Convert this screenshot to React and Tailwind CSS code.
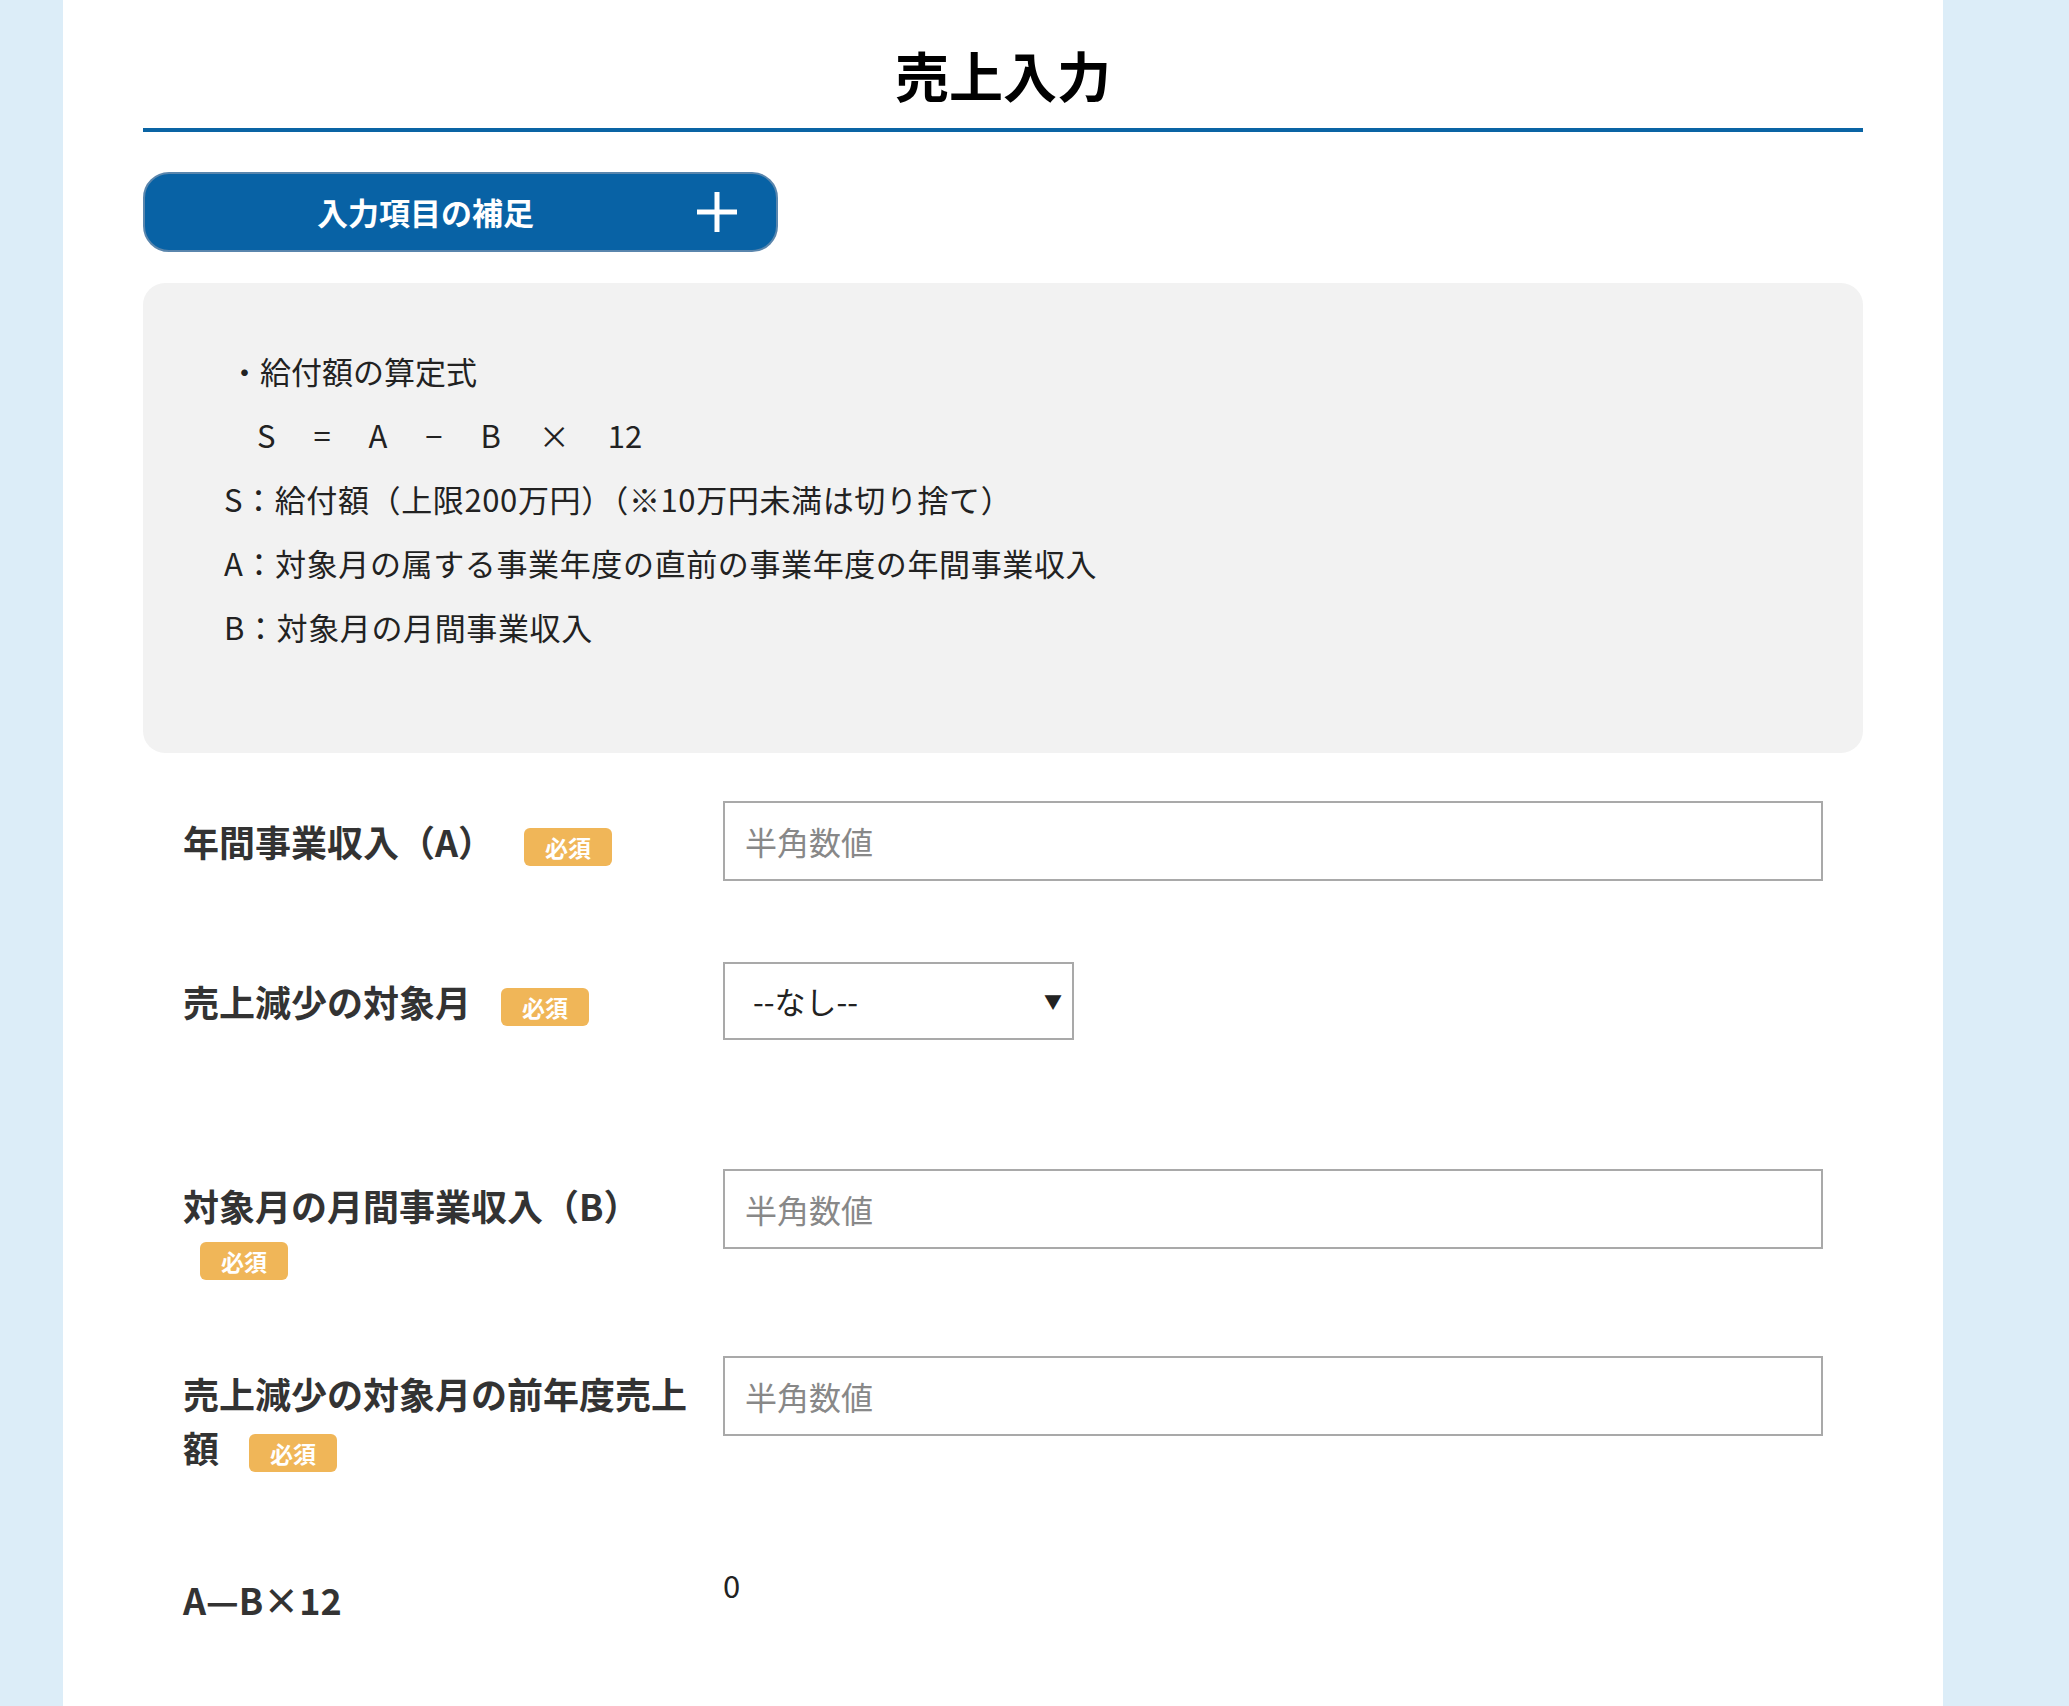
import React from 'react';

const font = { fontFamily: '"Noto Sans CJK JP", "Noto Sans", sans-serif' };

function Badge({ className = '' }) {
    return (
        <span className={"inline-flex items-center justify-center w-[88px] h-[38px] rounded-md bg-[#f0b658] text-white font-bold text-[23px] align-middle " + className}>必須</span>
    );
}

function NumInput() {
    return (
        <input
            type="text"
            placeholder="半角数値"
            className="w-[1100px] h-[80px] shrink-0 border-2 border-[#a9a9a9] px-5 text-[32px] text-[#333] placeholder:text-[#888] outline-none"
        />
    );
}

export default function App() {
    return (
        <div className="min-h-[1706px] bg-[#dcedf8] text-[#333]" style={font}>
            <div className="ml-[63px] w-[1880px] min-h-[1706px] bg-white px-[80px]">
                <h1 className="pt-[40px] text-center text-[54px] font-bold leading-[70px] text-black">売上入力</h1>
                <div className="mt-[18px] h-[4px] bg-[#0a64a4]" />

                <button className="mt-[40px] flex items-center w-[635px] h-[80px] rounded-[26px] border-2 border-[#5a86ad] bg-[#0862a5] text-white">
                    <span className="flex-1 text-center pl-[10px] text-[31px] font-bold">入力項目の補足</span>
                    <svg className="mr-[38px]" width="42" height="42" viewBox="0 0 42 42">
                        <path d="M21 1v40M1 21h40" stroke="white" strokeWidth="5" />
                    </svg>
                </button>

                <div className="mt-[31px] h-[470px] rounded-[22px] bg-[#f2f2f2] pt-[56px] pl-[81px] text-[31px] leading-[64px] text-[#222]">
                    <p className="pl-[5px]">・給付額の算定式</p>
                    <p className="pl-[33px] whitespace-pre">{'S　 =　 A　 −　 B　 ×　 12'}</p>
                    <p className="tracking-[0.02em]">S：給付額（上限200万円）（※10万円未満は切り捨て）</p>
                    <p className="tracking-[0.02em]">A：対象月の属する事業年度の直前の事業年度の年間事業収入</p>
                    <p className="tracking-[0.02em]">B：対象月の月間事業収入</p>
                </div>

                <div className="pl-[40px]">
                    <div className="mt-[48px] flex items-center h-[80px]">
                        <div className="w-[540px] text-[36px] font-bold">
                            年間事業収入（A）<Badge className="ml-[30px]" />
                        </div>
                        <NumInput />
                    </div>

                    <div className="mt-[81px] flex items-center h-[78px]">
                        <div className="w-[540px] text-[36px] font-bold">
                            売上減少の対象月<Badge className="ml-[30px]" />
                        </div>
                        <div className="relative w-[351px] h-[78px] border-2 border-[#a9a9a9] flex items-center pl-[28px] text-[31px] text-[#222]">
                            --なし--
                            <span className="absolute right-[10px] text-[18px]">▼</span>
                        </div>
                    </div>

                    <div className="mt-[129px] flex items-start h-[80px]">
                        <div className="w-[540px] text-[36px] font-bold leading-[72px]">
                            対象月の月間事業収入（B）
                            <div className="-mt-[22px] pl-[17px]"><Badge /></div>
                        </div>
                        <NumInput />
                    </div>

                    <div className="mt-[107px] flex items-start h-[80px]">
                        <div className="w-[540px] pr-[34px] text-[36px] font-bold leading-[54px] pt-[10px]">
                            売上減少の対象月の前年度売上額<Badge className="ml-[30px]" />
                        </div>
                        <NumInput />
                    </div>

                    <div className="mt-[126px] flex items-start">
                        <div className="w-[540px] pt-[10px] text-[36px] font-bold">A—B×12</div>
                        <div className="text-[31px] text-[#222]">0</div>
                    </div>
                </div>
            </div>
        </div>
    );
}
